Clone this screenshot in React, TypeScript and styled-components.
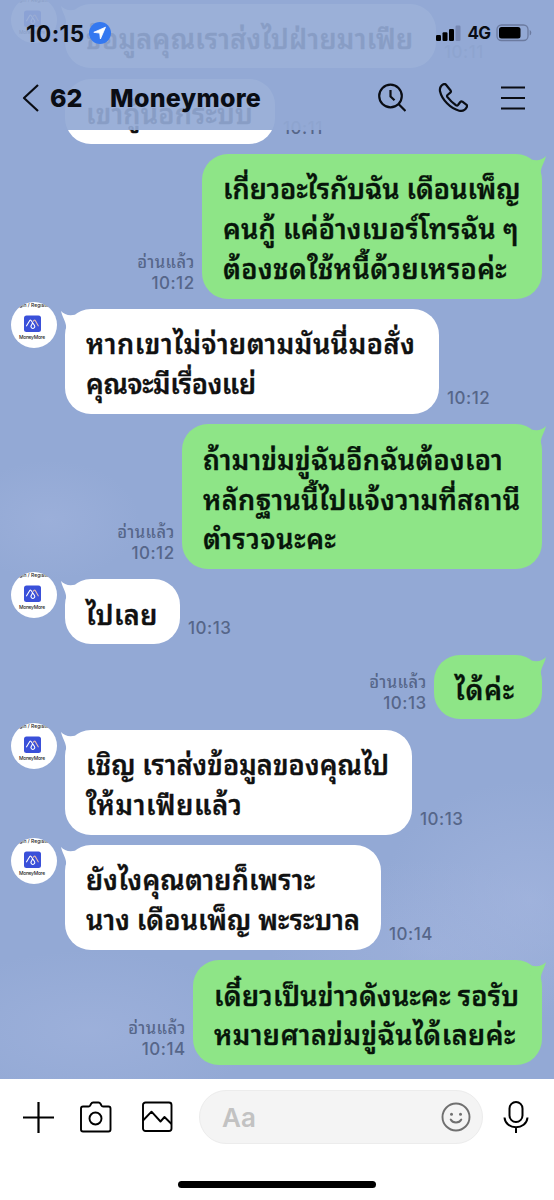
import React from "react";
import styled, { createGlobalStyle } from "styled-components";

const GlobalStyle = createGlobalStyle`
  *, *::before, *::after { box-sizing: border-box; }
  body { margin: 0; background: #fff; font-family: Inter, Thonburi, "Noto Sans Thai Looped", Loma, Garuda, Waree, "Noto Sans Thai", "Liberation Sans", sans-serif; }
`;

const Phone = styled.div`
  position: relative;
  width: 554px;
  height: 1200px;
  display: flex;
  flex-direction: column;
  overflow: hidden;
  background: #fff;
`;

const Chat = styled.main`
  height: 1079px;
  flex: none;
  padding: 3.7px 12px 0 11px;
  display: flex;
  flex-direction: column;
  gap: 10.6px;
  overflow: hidden;
  background:
    radial-gradient(ellipse 90px 60px at 50px 520px, rgba(170, 186, 226, 0.35), transparent),
    radial-gradient(ellipse 150px 120px at 530px 900px, rgba(170, 186, 226, 0.5), transparent),
    radial-gradient(ellipse 160px 90px at 430px 950px, rgba(170, 186, 226, 0.35), transparent),
    radial-gradient(ellipse 170px 80px at 90px 1030px, rgba(170, 186, 226, 0.4), transparent),
    #93a9d5;
`;

const Row = styled.div<{ $mine?: boolean; $grouped?: boolean }>`
  display: flex;
  flex: none;
  align-items: flex-end;
  justify-content: ${(p) => (p.$mine ? "flex-end" : "flex-start")};
  padding-left: ${(p) => (p.$grouped ? 54 : 0)}px;
`;

const Avatar = styled.svg`
  flex: none;
  align-self: flex-start;
  width: 46px;
  height: 46px;
  margin: -7px 8px 0 0;
`;

const Bubble = styled.div<{ $mine?: boolean; $width: number }>`
  position: relative;
  flex: none;
  width: ${(p) => p.$width}px;
  padding: 16.2px 0 8.6px 21px;
  border-radius: 26px;
  background: ${(p) => (p.$mine ? "#8ee587" : "#fff")};
  color: ${(p) => (p.$mine ? "#07150a" : "#111")};
`;

const Tail = styled.svg<{ $mine?: boolean }>`
  position: absolute;
  top: 1px;
  width: 20px;
  height: 20px;
  ${(p) => (p.$mine ? "right: -4px; transform: scaleX(-1);" : "left: -4px;")}
`;

const Line = styled.div<{ $spacing: number }>`
  height: 39.9px;
  line-height: 39.9px;
  font-size: 27px;
  font-weight: 600;
  white-space: nowrap;
  -webkit-text-stroke: 0.3px currentColor;
  letter-spacing: ${(p) => p.$spacing}px;
`;

const Meta = styled.div<{ $mine?: boolean }>`
  display: flex;
  flex-direction: column;
  align-items: ${(p) => (p.$mine ? "flex-end" : "flex-start")};
  margin: ${(p) => (p.$mine ? "0 7.4px 5px 0" : "0 0 5px 8px")};
  color: #566689;
  font-size: 17px;
  font-weight: 500;
  letter-spacing: 0.5px;
  line-height: 21px;
  white-space: nowrap;
`;

const ReadLabel = styled.span`
  font-size: 16.5px;
  letter-spacing: 0.4px;
`;

const Header = styled.header`
  position: absolute;
  inset: 0 0 auto 0;
  height: 130px;
  background: rgba(147, 169, 213, 0.92);
  color: #0a0d14;
`;

const StatusBar = styled.div`
  display: flex;
  align-items: center;
  height: 66px;
  padding: 0 22px 0 26px;
`;

const Clock = styled.span`
  width: 62px;
  font-size: 22.5px;
  font-weight: 700;
  letter-spacing: 0.4px;
`;

const Network = styled.span`
  margin: 0 6px 0 6.5px;
  font-size: 17px;
  font-weight: 700;
  letter-spacing: -0.9px;
`;

const Spacer = styled.span`
  flex: 1;
`;

const NavBar = styled.div`
  display: flex;
  align-items: center;
  height: 64px;
  padding: 0 28px 0 21px;
`;

const Count = styled.span`
  width: 60px;
  margin-left: 10px;
  font-size: 25px;
  font-weight: 800;
`;

const Title = styled.h1`
  flex: 1;
  margin: 0;
  font-size: 25px;
  font-weight: 800;
  letter-spacing: 0.3px;
`;

const NavIcons = styled.div`
  display: flex;
  align-items: center;
  gap: 32px;
`;

const Composer = styled.footer`
  display: flex;
  align-items: center;
  height: 76px;
  padding: 0 24px 0 22px;
`;

const Tools = styled.div`
  display: flex;
  align-items: center;
  gap: 25px;
  width: 177px;
`;

const Field = styled.div`
  display: flex;
  align-items: center;
  justify-content: space-between;
  width: 284px;
  height: 54px;
  margin-right: 20px;
  padding: 0 11px 0 22px;
  border: 1px solid #ececec;
  border-radius: 27px;
  background: #f4f4f4;
  color: #c2c2c2;
  font-size: 26px;
  font-weight: 600;
`;

const HomeBar = styled.div`
  width: 198px;
  height: 7px;
  margin: 26px 0 0 178px;
  border-radius: 4px;
  background: #000;
`;

type Message = { mine?: boolean; grouped?: boolean; width: number; time: string; lines: [string, number][] };

const messages: Message[] = [
  { width: 371, time: "10:11", lines: [["ข้อมูลคุณเราส่งไปฝ่ายมาเฟีย", 0.28]] },
  { grouped: true, width: 210, time: "10:11", lines: [["เขากู้นอกระบบ", 0.18]] },
  { mine: true, width: 340, time: "10:12", lines: [["เกี่ยวอะไรกับฉัน เดือนเพ็ญ", 0], ["คนกู้ แค่อ้างเบอร์โทรฉัน ๆ", 0.21], ["ต้องชดใช้หนี้ด้วยเหรอค่ะ", 0.37]] },
  { width: 374, time: "10:12", lines: [["หากเขาไม่จ่ายตามมันนี่มอสั่ง", 0.54], ["คุณจะมีเรื่องแย่", -0.37]] },
  { mine: true, width: 360, time: "10:12", lines: [["ถ้ามาข่มขู่ฉันอีกฉันต้องเอา", 0.25], ["หลักฐานนี้ไปแจ้งวามที่สถานี", 0.41], ["ตำรวจนะคะ", 0.68]] },
  { width: 115, time: "10:13", lines: [["ไปเลย", 0.4]] },
  { mine: true, width: 108, time: "10:13", lines: [["ได้ค่ะ", 0.8]] },
  { width: 347, time: "10:13", lines: [["เชิญ เราส่งข้อมูลของคุณไป", 0.05], ["ให้มาเฟียแล้ว", 0.7]] },
  { width: 316, time: "10:14", lines: [["ยังไงคุณตายก็เพราะ", 0.22], ["นาง เดือนเพ็ญ พะระบาล", 0.08]] },
  { mine: true, width: 349, time: "10:14", lines: [["เดี๋ยวเป็นข่าวดังนะคะ รอรับ", 0.27], ["หมายศาลข่มขู่ฉันได้เลยค่ะ", 0.46]] },
];

const ProfilePicture = () => (
  <Avatar viewBox="0 0 46 46">
    <defs>
      <clipPath id="face"><circle cx="23" cy="23" r="23" /></clipPath>
    </defs>
    <g clipPath="url(#face)">
      <rect width="46" height="46" fill="#fff" />
      <text x="23" y="5" fontSize="5" fontWeight="500" textAnchor="middle" fill="#222">gin / Registe</text>
      <rect x="13" y="13.5" width="17" height="16.5" rx="2.5" fill="#3a50d9" />
      <path d="M15.3 24.300l3.600-6q.5-.6 1 0l3.600 5.200a1.900 1.900 0 1 1-3.200-.1l1.500-2.800" fill="none" stroke="#fff" strokeWidth="1.100" />
      <path d="M22 19.500l1.300-1.300q.5-.3.900.2l3.300 5.800" fill="none" stroke="#e3b9b0" strokeWidth="1.100" />
      <text x="21" y="37.200" fontSize="4.900" fontWeight="500" textAnchor="middle" fill="#222" textLength="26">MoneyMore</text>
    </g>
  </Avatar>
);

const stroke = { fill: "none", stroke: "currentColor", strokeLinecap: "round", strokeLinejoin: "round" } as const;

export default function App() {
  return (
    <>
      <GlobalStyle />
      <Phone>
        <Chat>
          {messages.map((m, i) => (
            <Row key={i} $mine={m.mine} $grouped={m.grouped}>
              {!m.mine && !m.grouped && <ProfilePicture />}
              {m.mine && (
                <Meta $mine>
                  <ReadLabel>อ่านแล้ว</ReadLabel>
                  <span>{m.time}</span>
                </Meta>
              )}
              <Bubble $mine={m.mine} $width={m.width}>
                {!m.grouped && (
                  <Tail $mine={m.mine} viewBox="0 0 20 20">
                    <path d="M0 1C3 4.600 8 6 14 4.700L17 14L5 20C6.200 13 1.500 8 0 1Z" fill={m.mine ? "#8ee587" : "#fff"} />
                  </Tail>
                )}
                {m.lines.map(([text, spacing]) => (
                  <Line key={text} $spacing={spacing}>{text}</Line>
                ))}
              </Bubble>
              {!m.mine && <Meta><span>{m.time}</span></Meta>}
            </Row>
          ))}
        </Chat>

        <Composer>
          <Tools>
            <svg width="33" height="33" viewBox="0 0 33 33" {...stroke} strokeLinecap="butt" strokeWidth="2.200">
              <path d="M16.500 1v31M1 16.500h31" />
            </svg>
            <svg width="32" height="32" viewBox="0 0 32 32" {...stroke} strokeWidth="1.900">
              <path d="M3 5.500H8.500q1.200 0 1.800-1.200l.8-1.500q.6-1.300 2-1.300h5.400q1.400 0 2 1.300l.8 1.500q.6 1.200 1.800 1.200h5.400q2 0 2 2v21q0 2-2 2H3q-2 0-2-2V7.500q0-2 2-2Z" />
              <circle cx="15.500" cy="17.500" r="6" />
            </svg>
            <svg width="38" height="32" viewBox="-5 0 38 32" {...stroke} strokeWidth="1.900">
              <rect x="1" y="1.500" width="28.500" height="28.500" rx="2.500" />
              <path d="M1.500 19L9.500 10.700L18.500 20.500L22.500 16L29 22.500" />
            </svg>
          </Tools>
          <Field>
            <span>Aa</span>
            <svg width="30" height="30" viewBox="0 0 30 30" {...stroke} color="#707070" strokeWidth="1.900">
              <circle cx="15" cy="15" r="13.500" />
              <path d="M9.700 17.500c2 4 8.600 4 10.600 0" />
              <circle cx="10.500" cy="12.300" r="1.500" fill="currentColor" stroke="none" />
              <circle cx="19.500" cy="12.300" r="1.500" fill="currentColor" stroke="none" />
            </svg>
          </Field>
          <svg width="26" height="34" viewBox="0 0 26 34" {...stroke} strokeLinecap="butt" strokeWidth="2">
            <rect x="6.500" y="2" width="13" height="20" rx="6.500" />
            <path d="M1.500 17.500c1 13 22 13 23 0M13 27.300V33" />
          </svg>
        </Composer>
        <HomeBar />

        <Header>
          <StatusBar>
            <Clock>10:15</Clock>
            <svg width="24" height="22" viewBox="-1 0 24 22">
              <circle cx="11" cy="11" r="11" fill="#3478f0" />
              <path d="M16.500 5.200L4.800 10.300l5.900.8.700 5.900Z" fill="#fff" stroke="#fff" strokeWidth=".8" strokeLinejoin="round" />
            </svg>
            <Spacer />
            <svg width="25" height="16" viewBox="0 0 25 16">
              <rect x="0" y="10" width="5" height="6" rx="1.200" />
              <rect x="6.500" y="7.200" width="5" height="8.800" rx="1.200" />
              <rect x="13" y="4" width="5" height="12" rx="1.200" />
              <rect x="19.500" y="0.500" width="5" height="15.500" rx="1.200" fill="#7688b3" />
            </svg>
            <Network>4G</Network>
            <svg width="36" height="18" viewBox="0 0 36 18">
              <rect x="1" y="1" width="31" height="15.500" rx="4.500" fill="none" stroke="#6b7a9f" strokeWidth="1.300" />
              <rect x="3" y="3" width="21.500" height="11.500" rx="2.500" />
              <path d="M33.700 6v5.500q1.600-.7 1.600-2.750T33.700 6Z" fill="#6b7a9f" />
            </svg>
          </StatusBar>
          <NavBar>
            <svg width="19" height="28" viewBox="0 0 19 28" {...stroke} strokeLinecap="butt" strokeWidth="2.200">
              <path d="M17 1L3 14L17 27" />
            </svg>
            <Count>62</Count>
            <Title>Moneymore</Title>
            <NavIcons>
              <svg width="30" height="30" viewBox="-2 0 30 30" {...stroke} strokeLinecap="butt" strokeWidth="2.200">
                <circle cx="12.500" cy="13" r="11.300" />
                <path d="M20.500 21L27.500 28M12.500 7v6.500l4 3.800" />
              </svg>
              <svg width="30" height="30" viewBox="-1 0 30 30" {...stroke} strokeWidth="2.200">
                <path d="M7 1.700L11.600 7.500q.8 1.200-.3 2.200L8.500 12Q7.600 12.900 8.500 14.200C11 17.500 13.500 20 17 22.200q1.200.7 2-.2l2.300-3q.9-1 2.100-.3l3.900 2.900q1.300 1 .5 2.500c-1.500 3-4.200 4.400-7.600 3.600C11.500 25.600 2.800 16.500 1 8.300C.5 5 1.700 2.700 4.400 1.300Q6 .6 7 1.700Z" />
              </svg>
              <svg width="26" height="26" viewBox="0 0 26 26" {...stroke} strokeLinecap="butt" strokeWidth="2.200">
                <path d="M1 2.500h24M1 13h24M1 23.500h24" />
              </svg>
            </NavIcons>
          </NavBar>
        </Header>
      </Phone>
    </>
  );
}
